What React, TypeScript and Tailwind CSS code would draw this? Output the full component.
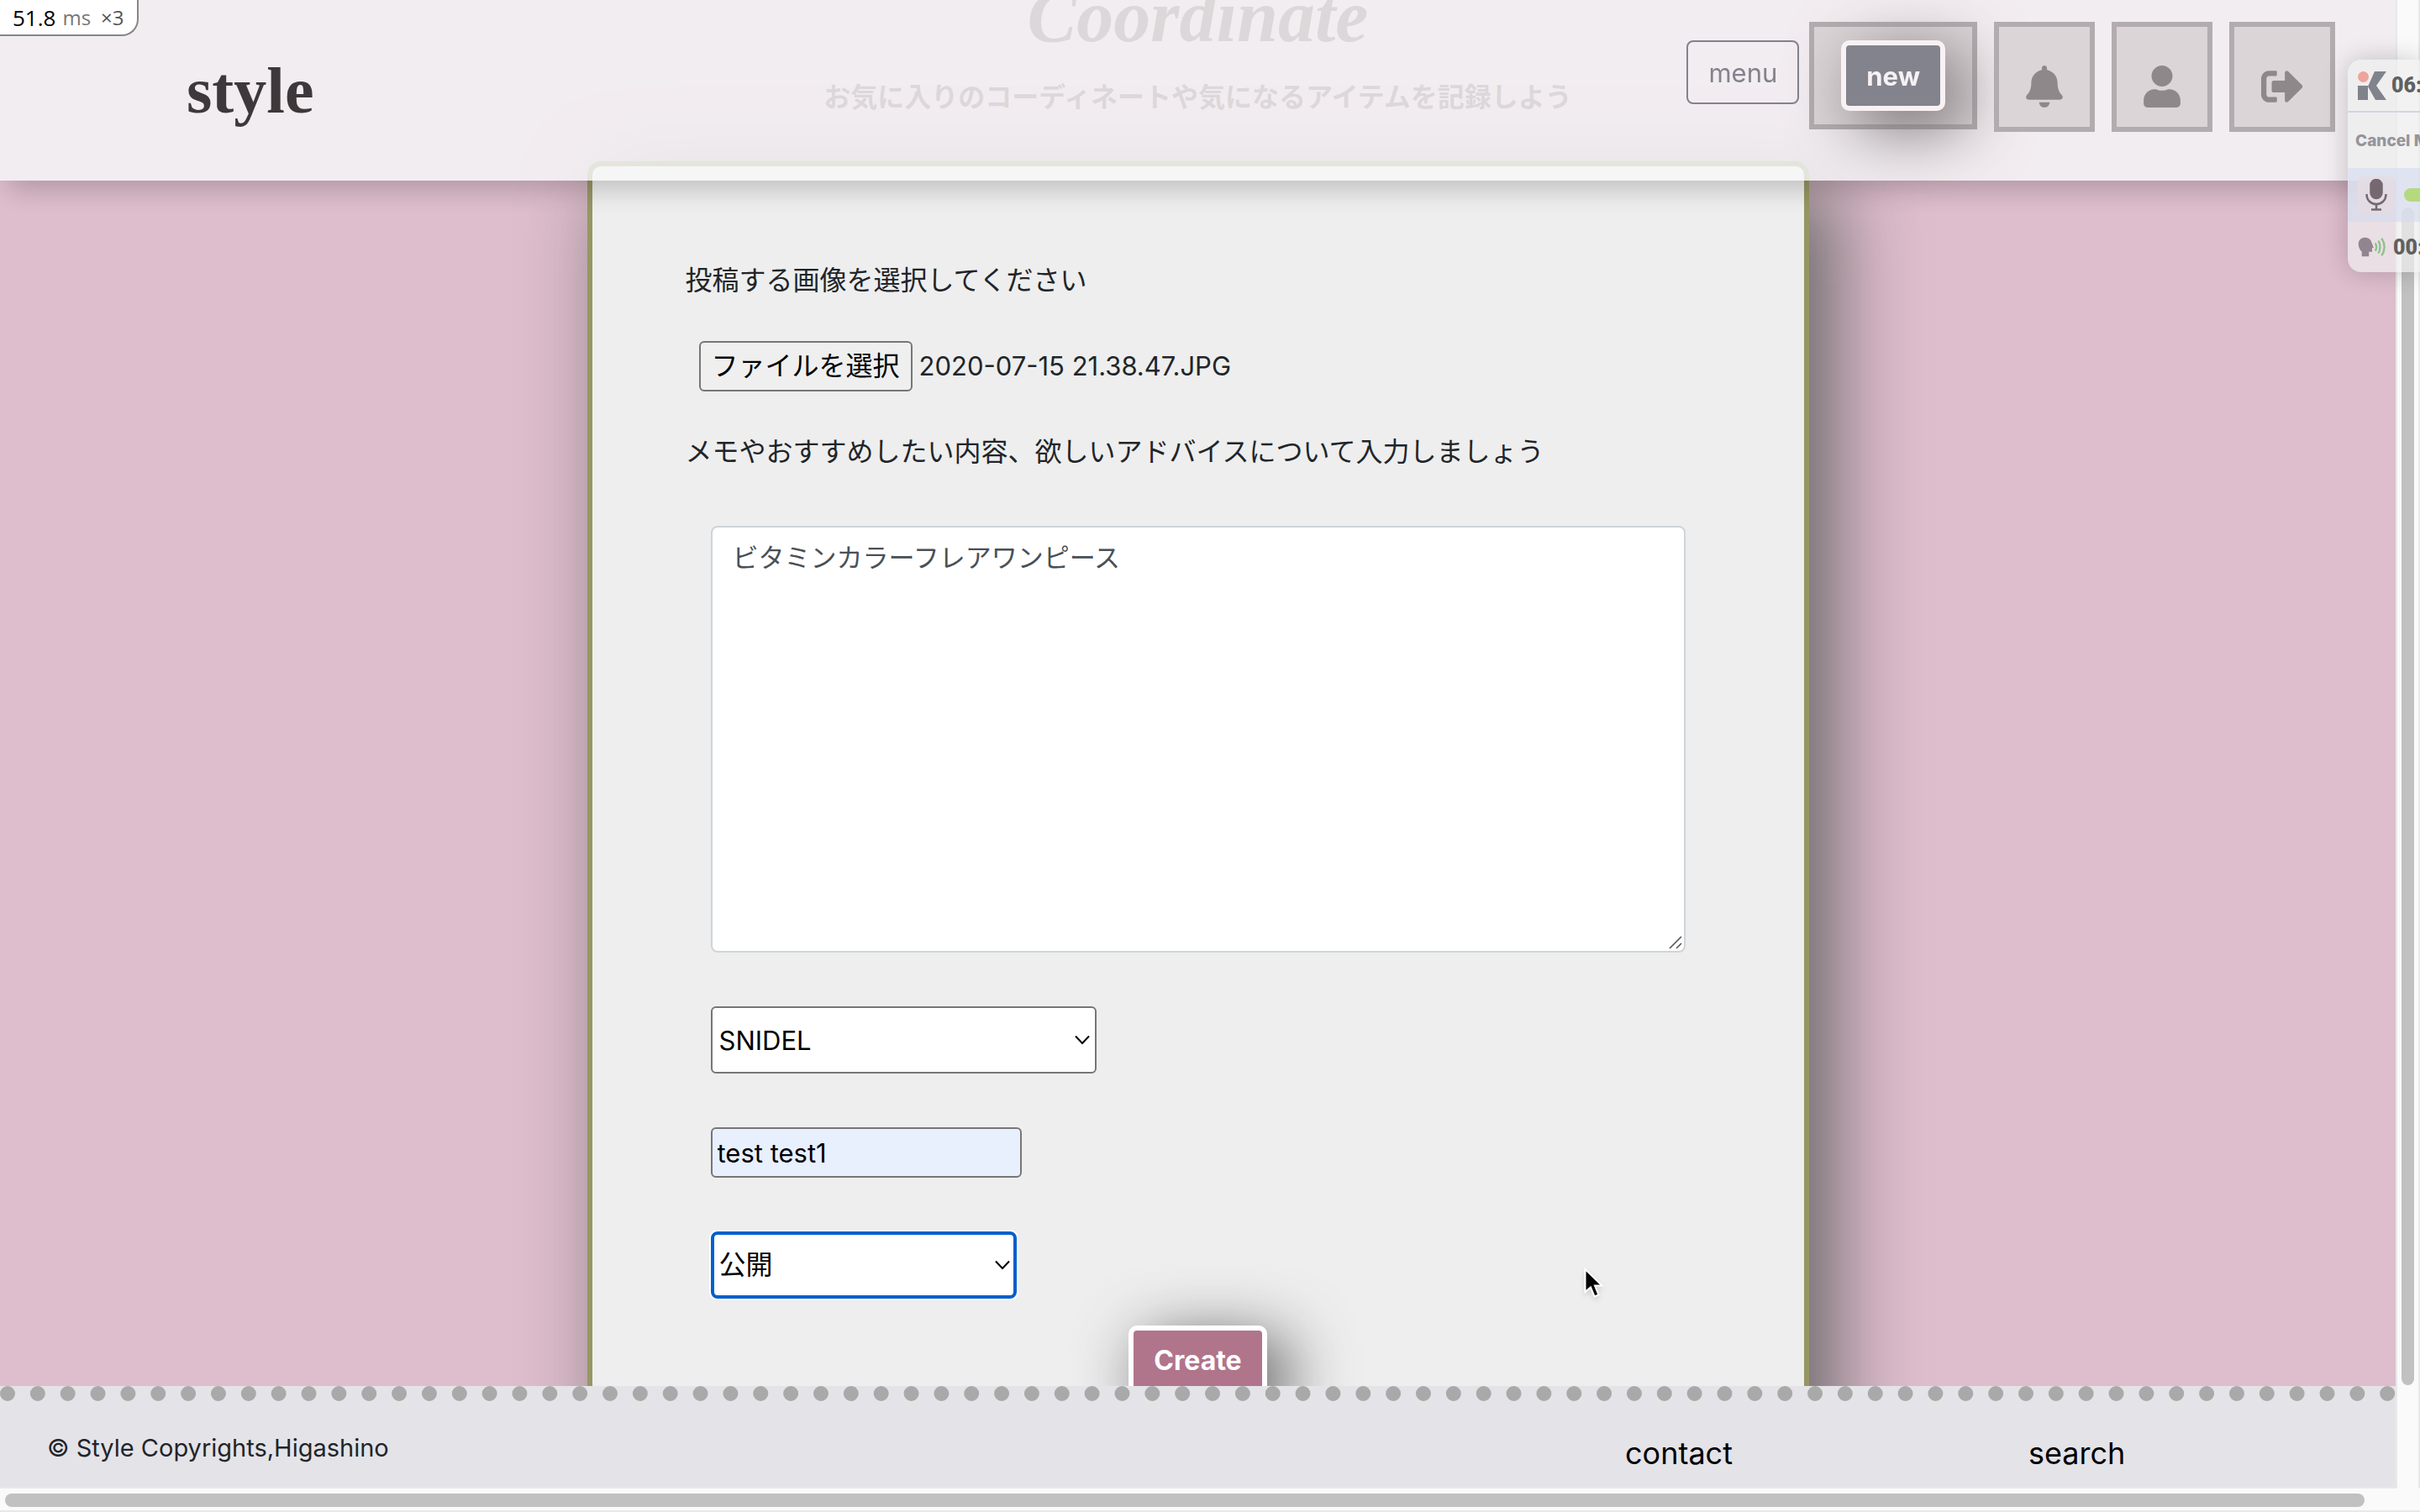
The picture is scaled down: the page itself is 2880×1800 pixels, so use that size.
import React from 'react';
import { FaBell, FaUser, FaSignOutAlt } from 'react-icons/fa';

function Chevron() {
  return (
    <svg viewBox="0 0 18 11" className="pointer-events-none absolute top-1/2 right-2 h-[11px] w-[18px] -translate-y-1/2" fill="none" stroke="#000" strokeWidth="2">
      <path d="M1 1 L9 9.5 L17 1" />
    </svg>
  );
}

function ProfilerBadge() {
  return (
    <div className="absolute top-0 left-0 z-30 flex h-[43px] items-center rounded-br-[20px] border-r-2 border-b-2 border-[#868686] bg-white px-[15px] font-['Open_Sans',sans-serif] leading-none">
      <span className="text-[26px] text-black">51.8</span>
      <span className="ml-2 text-2xl text-[#777]">ms</span>
      <span className="ml-3 text-2xl text-[#555]">×3</span>
    </div>
  );
}

function NavIcon({ label, children }: { label: string; children: React.ReactNode }) {
  return (
    <li className="border-6 border-[#a9a9a9] bg-[#dcdcdc] px-8 pt-[46px] pb-[23px]">
      <a href="#" aria-label={label} className="block text-[#7c7c7c]">
        {children}
      </a>
    </li>
  );
}

function Header() {
  return (
    <header className="absolute inset-x-0 top-0 z-20 flex h-[215px] items-start justify-between bg-[#f8f9fa] pr-[72px] pl-[222px] opacity-80 shadow-[10px_10px_30px_rgba(0,0,0,0.26)]">
      <a href="#" className="pt-16 font-['Liberation_Serif',serif] text-[78px] leading-[88px] font-bold text-[#181818]">
        style
      </a>
      <nav className="flex items-start pt-[26px]">
        <button className="mt-[22px] mr-3 h-[76px] rounded-lg border-2 border-[#6c757d] px-6 text-[31px] leading-none text-[#6c757d]">menu</button>
        <ul className="flex items-start gap-5">
          <li className="border-6 border-[#a9a9a9] bg-[#dcdcdc] px-8 py-4">
            <button className="block h-[84px] rounded-[10px] border-6 border-white bg-[#6c757d] px-6 text-[31px] leading-none font-bold text-white shadow-[20px_20px_80px_#555]">new</button>
          </li>
          <NavIcon label="notifications">
            <FaBell className="h-[50px] w-11" />
          </NavIcon>
          <NavIcon label="profile">
            <FaUser className="h-[50px] w-11" />
          </NavIcon>
          <NavIcon label="log out">
            <FaSignOutAlt className="size-[50px]" />
          </NavIcon>
        </ul>
      </nav>
    </header>
  );
}

function PostForm() {
  return (
    <form className="mx-auto mt-13 flex w-[51%] flex-col rounded-2xl border-6 border-[#969664] bg-[#eee] px-[111px] pt-28 pb-16 shadow-[30px_30px_100px_#666]">
      <p className="leading-12">投稿する画像を選択してください</p>
      <div className="mt-12 ml-4 flex items-center gap-2">
        <input id="photo" type="file" className="sr-only" />
        <label htmlFor="photo" className="flex h-[60px] items-center rounded-md border-2 border-[#767676] bg-[#efefef] px-[13px] text-black">
          ファイルを選択
        </label>
        <span className="text-[31px]">2020-07-15 21.38.47.JPG</span>
      </div>
      <label htmlFor="memo" className="mt-12 leading-12">
        メモやおすすめしたい内容、欲しいアドバイスについて入力しましょう
      </label>
      <div className="mx-[30px] mt-16 flex flex-col items-start gap-16">
        <div className="relative w-full">
          <textarea id="memo" defaultValue="ビタミンカラーフレアワンピース" className="block h-[508px] w-full resize-none rounded-lg border-2 border-[#ced4da] bg-white px-6 py-3 text-[31px] leading-12 text-[#495057]" />
          <svg viewBox="0 0 16 16" className="pointer-events-none absolute right-1 bottom-1 size-4" stroke="#555" strokeWidth="1.6">
            <path d="M1 15 L15 1 M9 15 L15 9" />
          </svg>
        </div>
        <div className="relative w-[459px]">
          <select aria-label="ブランド" className="block h-20 w-full appearance-none rounded-md border-2 border-[#767676] bg-white px-2 pt-0.5 text-[31px] text-black">
            <option>SNIDEL</option>
          </select>
          <Chevron />
        </div>
        <input aria-label="タグ" type="text" defaultValue="test test1" className="h-[60px] w-[370px] rounded-md border-2 border-[#767676] bg-[#e8f0fe] px-[6px] text-[31px] text-black" />
        <div className="relative w-[364px]">
          <select aria-label="公開設定" className="block h-20 w-full appearance-none rounded-lg border-4 border-[#005fcc] bg-white px-[6px] text-black ring-2 ring-white">
            <option>公開</option>
          </select>
          <Chevron />
        </div>
      </div>
      <button type="button" className="mt-8 h-[84px] self-center rounded-[10px] border-6 border-white bg-[#b0758b] px-6 leading-none font-bold text-white shadow-[20px_20px_80px_#444]">
        Create
      </button>
    </form>
  );
}

function Footer() {
  return (
    <footer className="relative z-10 flex h-[122px] items-start border-t-[18px] border-b-2 border-t-[#a9a9a9] border-b-[#e8e8ea] bg-[#e4e3e8] pl-14 [border-top-style:dotted]">
      <p className="flex-1 pt-9 text-[29px] leading-10">© Style Copyrights,Higashino</p>
      <nav className="flex w-[917px] pt-[42px] text-[36px] leading-10 text-black">
        <a href="#" className="w-[480px]">contact</a>
        <a href="#">search</a>
      </nav>
    </footer>
  );
}

function RecorderPanel() {
  return (
    <aside className="absolute top-[71px] right-0 z-40 w-[86px] overflow-hidden rounded-l-2xl bg-[#eeeeee]/70 font-['Roboto',sans-serif] whitespace-nowrap text-[#606060] shadow-[0_0_30px_rgba(0,0,0,0.2)]">
      <div className="flex h-[63px] items-center gap-[6px] border-b-2 border-[#d4d4e0] pl-3 text-[25px] leading-none font-black">
        <svg viewBox="0 0 34 34" className="size-[34px] shrink-0">
          <circle cx="6.500" cy="6.500" r="6.500" fill="#eea498" />
          <path d="M0 17 H12 V34 H0 Z M12 18 L20 0 H34 L22 17 L34 34 H21 Z" fill="#80838c" />
        </svg>
        06:
      </div>
      <div className="flex h-[66px] items-center pl-[9px] font-['Inter',sans-serif] text-[19px] leading-none font-extrabold text-[#96949b]">Cancel M</div>
      <div className="flex h-16 items-center gap-[11px] bg-[#d4daf0]/60 pl-3">
        <span className="flex size-11 shrink-0 items-center justify-center rounded-md bg-[#e6dce2]/80">
          <svg viewBox="0 0 26 38" className="h-[38px] w-[26px]" fill="none" stroke="#75696f" strokeWidth="2.500">
            <rect x="6.500" y="1" width="13" height="22" rx="6.500" fill="#75696f" />
            <path d="M1.500 18 C1.500 34 24.500 34 24.500 18 M13 30 V36 M7 36.500 H19" />
          </svg>
        </span>
        <span className="h-4 w-10 shrink-0 rounded-full bg-[#b5d97f]" />
      </div>
      <div className="flex h-[60px] items-center gap-2 pl-3 text-[25px] leading-none font-black">
        <svg viewBox="0 0 36 26" className="h-[26px] w-[34px] shrink-0" fill="none" stroke="#90c08e" strokeWidth="2.500">
          <path d="M5 25 V19 C-2 12 0 1 9 1 C15 1 17 5 18 9 L20 14 H18 V19 H14 V25 Z" fill="#93858f" stroke="none" />
          <path d="M22 8 Q25 13 22 18 M26 5 Q30 13 26 21 M30 2 Q37 13 30 24" />
        </svg>
        00:
      </div>
    </aside>
  );
}

export default function App() {
  return (
    <div className="relative flex h-screen flex-col overflow-hidden bg-[#fafafa] font-['Inter','Noto_Sans_CJK_JP',sans-serif] text-[32px] text-[#212529]">
      <div className="flex min-h-0 flex-1">
        <div className="relative flex min-w-0 flex-1 flex-col overflow-hidden">
          <ProfilerBadge />
          <Header />
          <main className="min-h-0 flex-1 overflow-hidden bg-[#debdcc]">
            <h1 className="-mt-5 text-center font-['Liberation_Serif',serif] text-[88px] leading-20 font-bold text-[#6e5058] italic">Coordinate</h1>
            <h2 className="mt-8 text-center leading-12 font-bold text-[#6e5058]">お気に入りのコーディネートや気になるアイテムを記録しよう</h2>
            <PostForm />
          </main>
          <Footer />
        </div>
        <div className="flex w-[29px] flex-col border-x-2 border-[#e8e8e8] px-[5px] pt-[247px] pb-[123px]">
          <div className="flex-1 rounded-full bg-[#c1c1c1]" />
        </div>
      </div>
      <div className="flex h-7 items-start border-b-2 border-[#e8e8e8] pt-[6px] pr-[66px] pl-[6px]">
        <div className="h-4 flex-1 rounded-full bg-[#c1c1c1]" />
      </div>
      <RecorderPanel />
      <svg viewBox="0 0 24 38" className="pointer-events-none absolute top-[1509px] left-[1885px] h-[38px] w-6 drop-shadow-md" fill="#000" stroke="#fff" strokeWidth="2">
        <path d="M1.500 2 V29 L8 23.500 L12.500 34.500 L17.500 32.500 L13 21.500 H21.500 Z" />
      </svg>
    </div>
  );
}
